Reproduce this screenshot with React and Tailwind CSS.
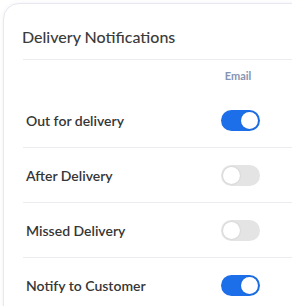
import React from "react";

const rows = [
    { label: "Out for delivery", on: true },
    { label: "After Delivery", on: false },
    { label: "Missed Delivery", on: false },
    { label: "Notify to Customer", on: true },
];

const Toggle = ({ on }) => (
    <div
        className={
            on
                ? "w-[39px] h-[21px] rounded-full bg-[#1c6fe8] p-[2px] flex justify-end"
                : "w-[39px] h-[21px] rounded-full bg-[#e4e4e4] p-[2px] flex justify-start"
        }
    >
        <div className="w-[17px] h-[17px] rounded-full bg-white shadow-[0_0_2px_rgba(0,0,0,0.15)]" />
    </div>
);

const App = () => {
    return (
        <div className="w-[292px] h-[306px] overflow-hidden bg-white pl-[3px] pt-[3px] font-['Lato',sans-serif]">
            {/* Card */}
            <div className="w-[320px] h-[340px] bg-white border border-[#e7e7ef] rounded-2xl shadow-[0_0_4px_rgba(120,120,160,0.08)]">
                <div className="pl-[18px] pt-[23px] pb-[12px] text-[16px] leading-[20px] font-medium text-[#3b3b3b]">
                    Delivery Notifications
                </div>

                <div className="ml-[19px] border-t border-[#ececf0]">
                    {/* Column header */}
                    <div className="h-[33px] flex items-center pl-[199px]">
                        <span className="w-[32px] text-center text-[11px] font-bold text-[#8595b3]">Email</span>
                    </div>

                    {rows.map((row, i) => (
                        <div
                            key={row.label}
                            className={
                                i < rows.length - 1
                                    ? "h-[55px] flex items-center border-b border-[#ececf0]"
                                    : "h-[55px] flex items-center"
                            }
                        >
                            <span className="w-[198px] pl-[3px] text-[14px] font-semibold text-[#363636]">
                                {row.label}
                            </span>
                            <Toggle on={row.on} />
                        </div>
                    ))}
                </div>
            </div>
        </div>
    );
};

export default App;
